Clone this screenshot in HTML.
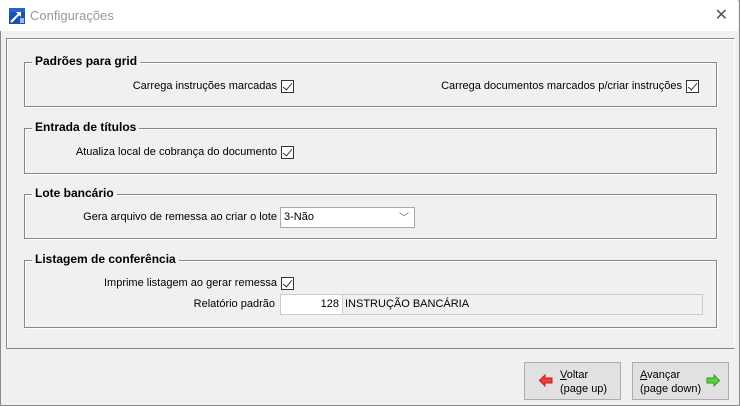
<!DOCTYPE html>
<html><head><meta charset="utf-8"><style>
*{box-sizing:border-box;margin:0;padding:0}
body{width:740px;height:406px;background:#f0f0f0;font-family:"Liberation Sans",sans-serif;font-size:11px;color:#000;position:relative;overflow:hidden}
.win{position:absolute;left:0;top:0;width:740px;height:406px;border:1px solid #8a8a8a;border-top:1px solid #aaa}
.title{position:absolute;left:0;top:0;width:738px;height:31px;background:#fff}
.title .t{position:absolute;left:30px;top:8px;color:#999;font-size:13px}
.x{position:absolute;right:10px;top:5px;font-size:16px;color:#555}
.panel{position:absolute;left:6px;top:38px;width:729px;height:311px;border:1px solid #888;border-right-color:#fff;border-bottom-color:#888;box-shadow:inset 1px 1px 0 #fff}
.grp{position:absolute;left:24px;width:693px;border:1px solid #888;box-shadow:1px 1px 0 #fff, inset 1px 1px 0 #fff}
.grp .h{position:absolute;left:7px;top:-9px;background:#f0f0f0;padding:0 3px;font-weight:bold;font-size:12px}
.l{position:absolute;white-space:nowrap}
.r{position:absolute;white-space:nowrap;text-align:right}
.cb{position:absolute;width:13px;height:13px;border:1px solid #333;background:#fff}
.cb:after{content:"";position:absolute;left:3px;top:0px;width:4px;height:8px;border:solid #333;border-width:0 1.3px 1.3px 0;transform:rotate(40deg)}
.btn{position:absolute;top:362px;width:97px;height:38px;border:1px solid #adadad;background:#e1e1e1;font-size:12px;line-height:14px}
</style></head><body>
<div class="win"></div>
<div class="title">
<svg style="position:absolute;left:9px;top:8px" width="16" height="16"><rect width="16" height="16" fill="#1e50b4"/><rect y="0" width="16" height="4" fill="#2a62cc"/><path d="M2 14 L11 5" stroke="#fff" stroke-width="2"/><path d="M7 4 H12 V9 Z" fill="#fff"/><rect x="11" y="10" width="4" height="5" fill="#9fb8e8"/></svg>
<div class="t">Configurações</div><div class="x">✕</div></div>
<div class="panel"></div>

<div class="grp" style="top:62px;height:45px"><span class="h">Padrões para grid</span></div>
<div class="r" style="right:463px;top:80px">Carrega instruções marcadas</div><div class="cb" style="left:281px;top:80px"></div>
<div class="r" style="right:58px;top:80px">Carrega documentos marcados p/criar instruções</div><div class="cb" style="left:686px;top:80px"></div>

<div class="grp" style="top:128px;height:46px"><span class="h">Entrada de títulos</span></div>
<div class="r" style="right:463px;top:146px">Atualiza local de cobrança do documento</div><div class="cb" style="left:281px;top:146px"></div>

<div class="grp" style="top:194px;height:45px"><span class="h">Lote bancário</span></div>
<div class="r" style="right:463px;top:211px">Gera arquivo de remessa ao criar o lote</div>
<div style="position:absolute;left:280px;top:207px;width:135px;height:21px;border:1px solid #aaa;background:#fff"><span class="l" style="left:3px;top:3px">3-Não</span><span class="l" style="right:5px;top:1px;color:#666;font-size:10px">﹀</span></div>

<div class="grp" style="top:260px;height:68px"><span class="h">Listagem de conferência</span></div>
<div class="r" style="right:463px;top:277px">Imprime listagem ao gerar remessa</div><div class="cb" style="left:281px;top:277px"></div>
<div class="r" style="right:465px;top:298px">Relatório padrão</div>
<div style="position:absolute;left:280px;top:294px;width:63px;height:21px;border:1px solid #ccc;background:#fff"><span class="l" style="right:3px;top:3px">128</span></div>
<div style="position:absolute;left:342px;top:294px;width:361px;height:21px;border:1px solid #ccc;background:#f0f0f0"><span class="l" style="left:2px;top:3px">INSTRUÇÃO BANCÁRIA</span></div>

<div class="btn" style="left:524px"><svg style="position:absolute;left:14px;top:11px" width="14" height="13"><path d="M0.5 6.5 L6 1 V4 H13 V9 H6 V12 Z" fill="#f03c3c" stroke="#c02020"/></svg><div class="l" style="left:35px;top:5px;font-size:11px;line-height:14px"><u>V</u>oltar<br>(page up)</div></div>
<div class="btn" style="left:632px"><div class="l" style="left:7px;top:5px;font-size:11px;line-height:14px"><u>A</u>vançar<br>(page down)</div><svg style="position:absolute;left:73px;top:11px" width="14" height="13"><path d="M13.5 6.5 L8 1 V4 H1 V9 H8 V12 Z" fill="#5cd040" stroke="#2f9a20"/></svg></div>
</body></html>
